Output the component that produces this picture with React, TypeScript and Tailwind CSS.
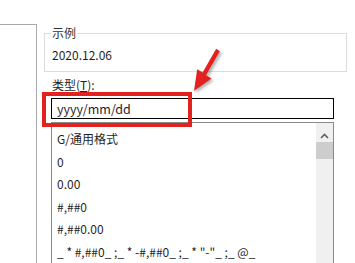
import React from "react";

const rows = [
  "G/通用格式",
  "0",
  "0.00",
  "#,##0",
  "#,##0.00",
  '_ * #,##0_ ;_ * -#,##0_ ;_ * "-"_ ;_ @_',
];

export default function App() {
  return (
    <div
      className="relative w-[355px] h-[263px] overflow-hidden bg-white flex text-[#1f1f1f] text-[12px]"
      style={{ fontFamily: '"Noto Sans CJK SC", "Noto Sans", sans-serif' }}
    >
      <div className="w-[37px] shrink-0 mt-[24px] border-t border-r border-[#a9a9a9]" />
      <div className="flex-1 pl-[7px]">
        <div className="relative mt-[33px] w-[303px] h-[39px] border border-[#dcdcdc]">
          <div className="absolute -top-[9px] left-[6px] px-[1px] bg-white leading-[16px] text-[#333]">
            示例
          </div>
          <div className="pl-[7px] pt-[13px] leading-[16px]">2020.12.06</div>
        </div>
        <div className="pl-[8px] mt-[5px] leading-[16px]">
          类型(<span className="underline">T</span>):
        </div>
        <div className="ml-[7px] mt-[5px] w-[283px] h-[21px] border border-black pl-[5px] leading-[19px] text-[12.5px]">
          yyyy/mm/dd
        </div>
        <div className="ml-[7px] mt-[3px] w-[283px] h-[200px] border border-[#8a8a8a] flex">
          <div className="flex-1 pt-[5px] pl-[5px]">
            {rows.map((r) => (
              <div key={r} className="h-[22.5px] leading-[22.5px] whitespace-pre">
                {r}
              </div>
            ))}
          </div>
          <div className="w-[17px] bg-[#f0f0f0] flex flex-col items-center">
            <svg width="17" height="19" viewBox="0 0 17 19" className="shrink-0">
              <path d="M5 15 L8.5 11.5 L12 15" fill="none" stroke="#606060" strokeWidth="1.6" />
            </svg>
            <div className="w-[17px] h-[17px] bg-[#cdcdcd]" />
          </div>
        </div>
      </div>

      {/* annotation overlay */}
      <div className="absolute left-[42px] top-[92px] w-[150px] h-[35px] border-[4px] border-[#e3211f]" />
      <svg
        className="absolute left-0 top-0"
        width="355"
        height="263"
        viewBox="0 0 355 263"
        style={{ filter: "drop-shadow(2px 2px 1.5px rgba(0,0,0,0.3))" }}
      >
        <polygon
          points="219.8,51.2 216.2,48.8 202.6,72.4 197.2,69.2 194,91 211.5,78.5 206,75.2"
          fill="#e3211f"
        />
      </svg>
    </div>
  );
}
